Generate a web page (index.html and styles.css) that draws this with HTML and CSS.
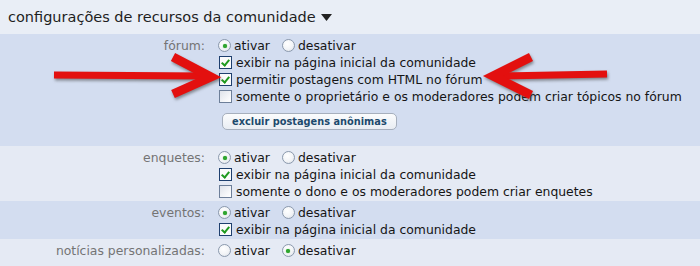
FILE: index.html
```html
<!DOCTYPE html>
<html lang="pt">
<head>
<meta charset="utf-8">
<title>configurações de recursos da comunidade</title>
<link rel="stylesheet" href="styles.css">
</head>
<body>
<div class="page">
  <div class="header">
    <span class="title">configurações de recursos da comunidade</span>
    <svg class="caret" width="11" height="7" viewBox="0 0 11 7"><path d="M0 0H11L5.5 7Z" fill="#222"/></svg>
  </div>

  <div class="section blue forum">
    <div class="label">fórum:</div>
    <div class="opts">
      <div class="line">
        <span class="radio on"></span><span class="txt">ativar</span>
        <span class="radio second"></span><span class="txt">desativar</span>
      </div>
      <div class="line"><span class="check on"></span><span class="txt">exibir na página inicial da comunidade</span></div>
      <div class="line"><span class="check on"></span><span class="txt">permitir postagens com HTML no fórum</span></div>
      <div class="line"><span class="check"></span><span class="txt">somente o proprietário e os moderadores podem criar tópicos no fórum</span></div>
      <div class="btnrow"><span class="btn">excluir postagens anônimas</span></div>
    </div>
  </div>

  <div class="section light enquetes">
    <div class="label">enquetes:</div>
    <div class="opts">
      <div class="line">
        <span class="radio on"></span><span class="txt">ativar</span>
        <span class="radio second"></span><span class="txt">desativar</span>
      </div>
      <div class="line"><span class="check on"></span><span class="txt">exibir na página inicial da comunidade</span></div>
      <div class="line"><span class="check"></span><span class="txt">somente o dono e os moderadores podem criar enquetes</span></div>
    </div>
  </div>

  <div class="section blue eventos">
    <div class="label">eventos:</div>
    <div class="opts">
      <div class="line">
        <span class="radio on"></span><span class="txt">ativar</span>
        <span class="radio second"></span><span class="txt">desativar</span>
      </div>
      <div class="line"><span class="check on"></span><span class="txt">exibir na página inicial da comunidade</span></div>
    </div>
  </div>

  <div class="section light noticias">
    <div class="label">notícias personalizadas:</div>
    <div class="opts">
      <div class="line">
        <span class="radio"></span><span class="txt">ativar</span>
        <span class="radio on second"></span><span class="txt">desativar</span>
      </div>
    </div>
  </div>

  <svg class="arrows" width="700" height="266" viewBox="0 0 700 266">
    <g fill="none" stroke="#e3100f" stroke-linejoin="miter" stroke-linecap="butt">
      <path d="M54 75 L206 76" stroke-width="7"/>
      <path d="M173 57 L211 77 L173 94" stroke-width="9"/>
      <path d="M497 76 L607 74" stroke-width="7"/>
      <path d="M531 57 L493 76 L531 95" stroke-width="9"/>
    </g>
  </svg>
</div>
</body>
</html>
```
FILE: styles.css
```css
html, body {
  margin: 0;
  padding: 0;
}
body {
  width: 700px;
  height: 266px;
  overflow: hidden;
  background: #e6ebf5;
  font-family: "DejaVu Sans", Verdana, sans-serif;
}
.page {
  position: relative;
  width: 700px;
  height: 266px;
}
.header {
  height: 34px;
  background: #e9eef6;
  display: flex;
  align-items: center;
  padding-left: 8px;
  gap: 5px;
  color: #1e1e1e;
  font-size: 14.5px;
}
.caret {
  margin-top: 1px;
}
.section {
  display: grid;
  grid-template-columns: 205px 1fr;
  column-gap: 13px;
  padding-top: 3px;
  font-size: 12.4px;
  line-height: 17px;
}
.blue {
  background: #d3ddf0;
}
.light {
  background: #e5eaf4;
}
.forum {
  height: 109px;
}
.enquetes {
  height: 52px;
}
.eventos {
  height: 35px;
}
.noticias {
  height: 24px;
}
.label {
  text-align: right;
  color: #747474;
}
.opts {
  color: #151515;
}
.line {
  display: flex;
  align-items: center;
  height: 17px;
}
.txt {
  white-space: nowrap;
}
.radio {
  box-sizing: border-box;
  width: 13px;
  height: 13px;
  border: 1px solid #8b99ad;
  border-radius: 50%;
  background: radial-gradient(circle at 40% 35%, #ffffff 0%, #f2f4f7 55%, #d6dbe3 100%);
  margin-right: 3px;
  flex: none;
  position: relative;
}
.radio.on::after {
  content: "";
  position: absolute;
  left: 3.5px;
  top: 3.5px;
  width: 4px;
  height: 4px;
  border-radius: 50%;
  background: #2fa52f;
  box-shadow: 0 0 1px #2fa52f;
}
.radio.second {
  margin-left: 12px;
}
.check {
  width: 13px;
  height: 13px;
  box-sizing: border-box;
  border: 1px solid #1e3f6e;
  background: #fbfbfb;
  margin: 0 4px 0 1px;
  flex: none;
  position: relative;
}
.check:not(.on) {
  border-color: #6d7f99;
  background: linear-gradient(135deg, #dfe3ea 0%, #f7f8fa 70%, #ffffff 100%);
}
.check.on::after {
  content: "";
  position: absolute;
  left: 3px;
  top: 1px;
  width: 3px;
  height: 6px;
  border: solid #1f9a1f;
  border-width: 0 2px 2px 0;
  transform: rotate(40deg);
}
.btnrow {
  display: flex;
  padding-top: 8px;
}
.btn {
  display: inline-block;
  margin-left: 4px;
  height: 17px;
  box-sizing: border-box;
  padding: 0 9px;
  border: 1px solid #a6afbd;
  border-radius: 5px;
  background: linear-gradient(#fbfcfd, #e9edf3);
  color: #1d4a6d;
  font-weight: bold;
  font-size: 9.8px;
  line-height: 15px;
  white-space: nowrap;
}
.arrows {
  position: absolute;
  left: 0;
  top: 0;
  pointer-events: none;
  filter: drop-shadow(1px 2px 1.5px rgba(60, 60, 60, 0.55));
}
```
